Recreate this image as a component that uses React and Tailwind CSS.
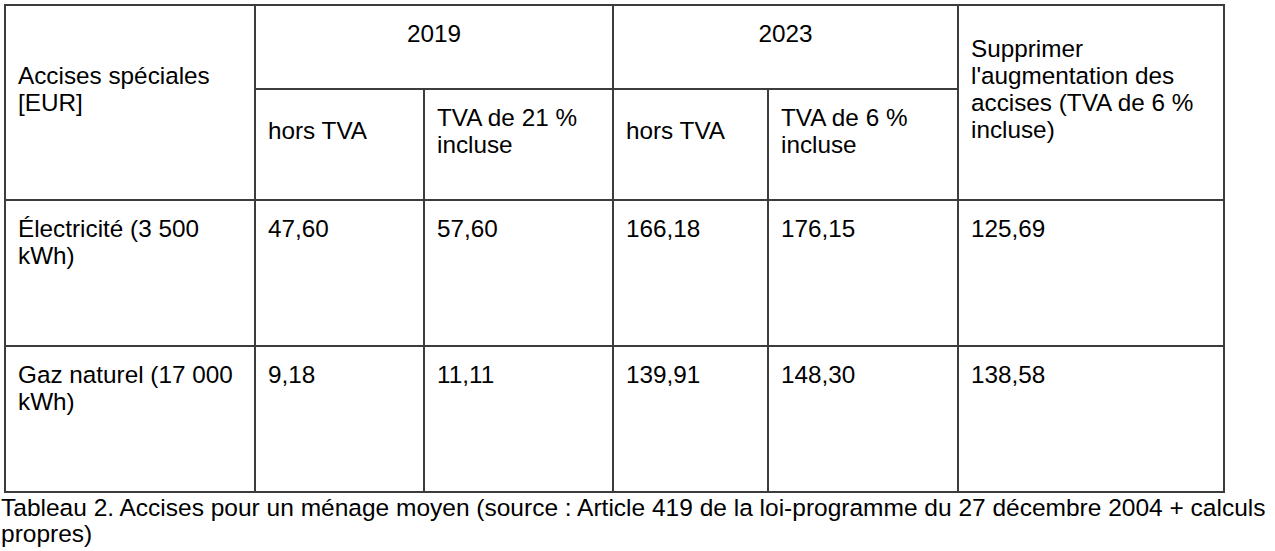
import React from 'react';

const cols = [250, 169, 189, 155, 190, 266];

const rows = [
    { label: ['Électricité (3 500', 'kWh)'], values: ['47,60', '57,60', '166,18', '176,15', '125,69'] },
    { label: ['Gaz naturel (17 000', 'kWh)'], values: ['9,18', '11,11', '139,91', '148,30', '138,58'] },
];

const App = () => {
    const cell = 'border-2 border-[#3c3c3c] px-3';
    const head = `${cell} align-middle pt-[4px] pb-[32px] font-normal text-left`;

    return (
        <div className="bg-white min-h-screen text-black font-['Liberation_Sans',Arial,sans-serif]">
            <div className="pl-[4px] pt-[4px]">
                <table className="table-fixed border-collapse text-[24.3px] leading-[27px]" style={{ width: 1219 }}>
                    <colgroup>
                        {cols.map((w, i) => (
                            <col key={i} style={{ width: w }} />
                        ))}
                    </colgroup>
                    <thead>
                        <tr className="h-[84px]">
                            <th rowSpan={2} className={head}>
                                Accises spéciales<br />[EUR]
                            </th>
                            <th colSpan={2} className={`${head} !text-center`}>2019</th>
                            <th colSpan={2} className={`${head} !text-center`}>2023</th>
                            <th rowSpan={2} className={head}>
                                Supprimer<br />l'augmentation des<br />accises (TVA de 6 %<br />incluse)
                            </th>
                        </tr>
                        <tr className="h-[111px]">
                            <th className={head}>hors TVA</th>
                            <th className={head}>TVA de 21 %<br />incluse</th>
                            <th className={head}>hors TVA</th>
                            <th className={head}>TVA de 6 %<br />incluse</th>
                        </tr>
                    </thead>
                    <tbody>
                        {rows.map((r) => (
                            <tr key={r.label[0]} className="h-[146px]">
                                <td className={`${cell} align-top pt-[14px]`}>
                                    {r.label[0]}<br />{r.label[1]}
                                </td>
                                {r.values.map((v, i) => (
                                    <td key={i} className={`${cell} align-top pt-[14px]`}>{v}</td>
                                ))}
                            </tr>
                        ))}
                    </tbody>
                </table>
            </div>
            <p className="text-[24.5px] leading-[26px] pl-[1px] pt-[2px] whitespace-nowrap">
                Tableau 2. Accises pour un ménage moyen (source : Article 419 de la loi-programme du 27 décembre 2004 + calculs
                <br />propres)
            </p>
        </div>
    );
};

export default App;
